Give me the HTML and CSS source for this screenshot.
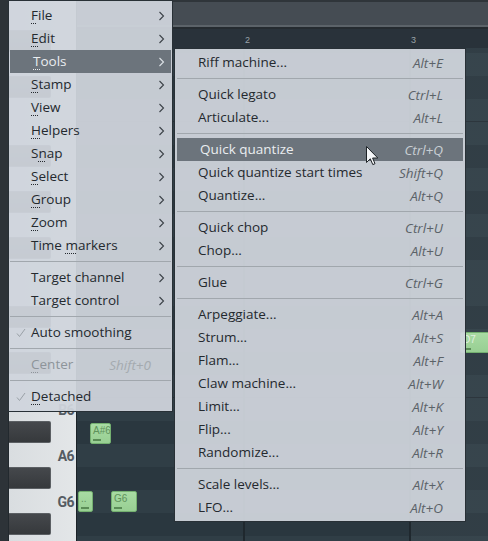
FILE: index.html
```html
<!DOCTYPE html>
<html>
<head>
<meta charset="utf-8">
<link rel="stylesheet" href="styles.css">
</head>
<body>
<div class="app">
  <div class="keys">
    <div class="k w"></div>
    <div class="k w"></div>
    <div class="k b"><span class="bk"></span></div>
    <div class="k w"></div>
    <div class="k b"><span class="bk"></span></div>
    <div class="k w"></div>
    <div class="k w"></div>
    <div class="k b"><span class="bk"></span></div>
    <div class="k w"></div>
    <div class="k b"><span class="bk"></span></div>
    <div class="k w"></div>
    <div class="k b"><span class="bk"></span></div>
    <div class="k w"></div>
    <div class="k w"></div>
    <div class="k b"><span class="bk"></span></div>
    <div class="k w"></div>
    <div class="k b"><span class="bk"></span></div>
    <div class="k w"></div>
    <div class="k w"><span class="kl">B6</span></div>
    <div class="k b"><span class="bk"></span></div>
    <div class="k w"><span class="kl">A6</span></div>
    <div class="k b"><span class="bk"></span></div>
    <div class="k w"><span class="kl">G6</span></div>
    <div class="k b"><span class="bk"></span></div>
    <div class="k w"></div>
  </div>
  <div class="main">
    <div class="toolbar"></div>
    <div class="ruler">
      <span class="bar-num b2">2</span>
      <span class="bar-num b3">3</span>
    </div>
    <div class="grid">
      <div class="note" style="left:13px;top:375px;width:21px;"><span class="nt">A#6</span></div>
      <div class="note" style="left:1px;top:443px;width:15px;"><span class="nt">..</span></div>
      <div class="note" style="left:34px;top:443px;width:26px;"><span class="nt">G6</span></div>
      <div class="note light" style="left:383px;top:284px;width:60px;"><span class="nt">D7</span></div>
    </div>
  </div>
</div>

<div class="menu main-menu">
  <div class="item"><span class="chk"></span><span class="lbl"><span class="mn">F</span>ile</span><span class="key"></span><span class="arr"><svg width="7" height="10" viewBox="0 0 7 10"><path d="M1.5 1l4 4-4 4" fill="none" stroke="currentColor" stroke-width="1.1"/></svg></span></div>
  <div class="item"><span class="chk"></span><span class="lbl"><span class="mn">E</span>dit</span><span class="key"></span><span class="arr"><svg width="7" height="10" viewBox="0 0 7 10"><path d="M1.5 1l4 4-4 4" fill="none" stroke="currentColor" stroke-width="1.1"/></svg></span></div>
  <div class="item active"><span class="chk"></span><span class="lbl"><span class="mn">T</span>ools</span><span class="key"></span><span class="arr"><svg width="7" height="10" viewBox="0 0 7 10"><path d="M1.5 1l4 4-4 4" fill="none" stroke="currentColor" stroke-width="1.1"/></svg></span></div>
  <div class="item"><span class="chk"></span><span class="lbl"><span class="mn">S</span>tamp</span><span class="key"></span><span class="arr"><svg width="7" height="10" viewBox="0 0 7 10"><path d="M1.5 1l4 4-4 4" fill="none" stroke="currentColor" stroke-width="1.1"/></svg></span></div>
  <div class="item"><span class="chk"></span><span class="lbl"><span class="mn">V</span>iew</span><span class="key"></span><span class="arr"><svg width="7" height="10" viewBox="0 0 7 10"><path d="M1.5 1l4 4-4 4" fill="none" stroke="currentColor" stroke-width="1.1"/></svg></span></div>
  <div class="item"><span class="chk"></span><span class="lbl"><span class="mn">H</span>elpers</span><span class="key"></span><span class="arr"><svg width="7" height="10" viewBox="0 0 7 10"><path d="M1.5 1l4 4-4 4" fill="none" stroke="currentColor" stroke-width="1.1"/></svg></span></div>
  <div class="item"><span class="chk"></span><span class="lbl">S<span class="mn">n</span>ap</span><span class="key"></span><span class="arr"><svg width="7" height="10" viewBox="0 0 7 10"><path d="M1.5 1l4 4-4 4" fill="none" stroke="currentColor" stroke-width="1.1"/></svg></span></div>
  <div class="item"><span class="chk"></span><span class="lbl"><span class="mn">S</span>elect</span><span class="key"></span><span class="arr"><svg width="7" height="10" viewBox="0 0 7 10"><path d="M1.5 1l4 4-4 4" fill="none" stroke="currentColor" stroke-width="1.1"/></svg></span></div>
  <div class="item"><span class="chk"></span><span class="lbl"><span class="mn">G</span>roup</span><span class="key"></span><span class="arr"><svg width="7" height="10" viewBox="0 0 7 10"><path d="M1.5 1l4 4-4 4" fill="none" stroke="currentColor" stroke-width="1.1"/></svg></span></div>
  <div class="item"><span class="chk"></span><span class="lbl"><span class="mn">Z</span>oom</span><span class="key"></span><span class="arr"><svg width="7" height="10" viewBox="0 0 7 10"><path d="M1.5 1l4 4-4 4" fill="none" stroke="currentColor" stroke-width="1.1"/></svg></span></div>
  <div class="item"><span class="chk"></span><span class="lbl">Time <span class="mn">m</span>arkers</span><span class="key"></span><span class="arr"><svg width="7" height="10" viewBox="0 0 7 10"><path d="M1.5 1l4 4-4 4" fill="none" stroke="currentColor" stroke-width="1.1"/></svg></span></div>
  <div class="sep"></div>
  <div class="item"><span class="chk"></span><span class="lbl">Target channel</span><span class="key"></span><span class="arr"><svg width="7" height="10" viewBox="0 0 7 10"><path d="M1.5 1l4 4-4 4" fill="none" stroke="currentColor" stroke-width="1.1"/></svg></span></div>
  <div class="item"><span class="chk"></span><span class="lbl">Target control</span><span class="key"></span><span class="arr"><svg width="7" height="10" viewBox="0 0 7 10"><path d="M1.5 1l4 4-4 4" fill="none" stroke="currentColor" stroke-width="1.1"/></svg></span></div>
  <div class="sep"></div>
  <div class="item"><span class="chk"><svg width="10" height="10" viewBox="0 0 10 10"><path d="M1 5.5l2.5 3L9 1" fill="none" stroke="currentColor" stroke-width="1"/></svg></span><span class="lbl">Auto smoothing</span><span class="key"></span><span class="arr"></span></div>
  <div class="sep"></div>
  <div class="item disabled"><span class="chk"></span><span class="lbl"><span class="mn">C</span>enter</span><span class="key">Shift+0</span><span class="arr"></span></div>
  <div class="sep"></div>
  <div class="item"><span class="chk"><svg width="10" height="10" viewBox="0 0 10 10"><path d="M1 5.5l2.5 3L9 1" fill="none" stroke="currentColor" stroke-width="1"/></svg></span><span class="lbl"><span class="mn">D</span>etached</span><span class="key"></span><span class="arr"></span></div>
</div>

<div class="menu sub-menu">
  <div class="item"><span class="chk"></span><span class="lbl">Riff machine...</span><span class="key">Alt+E</span><span class="arr"></span></div>
  <div class="sep"></div>
  <div class="item"><span class="chk"></span><span class="lbl">Quick legato</span><span class="key">Ctrl+L</span><span class="arr"></span></div>
  <div class="item"><span class="chk"></span><span class="lbl">Articulate...</span><span class="key">Alt+L</span><span class="arr"></span></div>
  <div class="sep"></div>
  <div class="item active"><span class="chk"></span><span class="lbl">Quick quantize</span><span class="key">Ctrl+Q</span><span class="arr"></span></div>
  <div class="item"><span class="chk"></span><span class="lbl">Quick quantize start times</span><span class="key">Shift+Q</span><span class="arr"></span></div>
  <div class="item"><span class="chk"></span><span class="lbl">Quantize...</span><span class="key">Alt+Q</span><span class="arr"></span></div>
  <div class="sep"></div>
  <div class="item"><span class="chk"></span><span class="lbl">Quick chop</span><span class="key">Ctrl+U</span><span class="arr"></span></div>
  <div class="item"><span class="chk"></span><span class="lbl">Chop...</span><span class="key">Alt+U</span><span class="arr"></span></div>
  <div class="sep"></div>
  <div class="item"><span class="chk"></span><span class="lbl">Glue</span><span class="key">Ctrl+G</span><span class="arr"></span></div>
  <div class="sep"></div>
  <div class="item"><span class="chk"></span><span class="lbl">Arpeggiate...</span><span class="key">Alt+A</span><span class="arr"></span></div>
  <div class="item"><span class="chk"></span><span class="lbl">Strum...</span><span class="key">Alt+S</span><span class="arr"></span></div>
  <div class="item"><span class="chk"></span><span class="lbl">Flam...</span><span class="key">Alt+F</span><span class="arr"></span></div>
  <div class="item"><span class="chk"></span><span class="lbl">Claw machine...</span><span class="key">Alt+W</span><span class="arr"></span></div>
  <div class="item"><span class="chk"></span><span class="lbl">Limit...</span><span class="key">Alt+K</span><span class="arr"></span></div>
  <div class="item"><span class="chk"></span><span class="lbl">Flip...</span><span class="key">Alt+Y</span><span class="arr"></span></div>
  <div class="item"><span class="chk"></span><span class="lbl">Randomize...</span><span class="key">Alt+R</span><span class="arr"></span></div>
  <div class="sep"></div>
  <div class="item"><span class="chk"></span><span class="lbl">Scale levels...</span><span class="key">Alt+X</span><span class="arr"></span></div>
  <div class="item"><span class="chk"></span><span class="lbl">LFO...</span><span class="key">Alt+O</span><span class="arr"></span></div>
</div>

<svg class="cursor" width="13" height="20" viewBox="0 0 13 20"><path d="M0.5 0.5V16.5L4.3 12.8L6.8 18.6L9 17.7L6.6 12H11.8Z" fill="#f4f6f8" stroke="#1d2226" stroke-width="1" stroke-linejoin="round"/></svg>
</body>
</html>
```

FILE: styles.css
```css
* { box-sizing: border-box; }
html, body { margin: 0; padding: 0; }
body {
  width: 488px;
  height: 541px;
  overflow: hidden;
  position: relative;
  background: #2d3338;
  font-family: "Open Sans", "Noto Sans", sans-serif;
}

.app {
  display: flex;
  height: 541px;
  padding-left: 8px;
}

/* piano keys */
.keys {
  width: 69px;
  flex: none;
  display: flex;
  flex-direction: column;
  margin-top: -16px;
  background: linear-gradient(to right, #d9dde0, #e3e6e8);
  border-right: 1px solid #1b2227;
  border-left: 1px solid #22292e;
}
.k {
  height: 23px;
  flex: none;
  display: flex;
  align-items: center;
  justify-content: flex-end;
  padding-right: 2px;
}
.k.b { justify-content: flex-start; padding: 0; align-items: flex-start; }
.bk {
  width: 42px;
  height: 22px;
  background: linear-gradient(to bottom, #45484c, #36393c);
  border: 1px solid #5b5f63;
  border-left: none;
  border-radius: 0 2px 2px 0;
}
.kl {
  font-family: Roboto, "Liberation Sans", sans-serif;
  font-weight: 700;
  font-size: 14px;
  letter-spacing: -0.6px;
  color: #555c63;
}

.main {
  flex: 1;
  display: flex;
  flex-direction: column;
}
.toolbar {
  height: 29px;
  flex: none;
  background: linear-gradient(to bottom, #2f353a 0 2px, #454c53 2px 25px, #5c6369 25px 27px, #252b30 27px);
}
.ruler {
  height: 19px;
  flex: none;
  position: relative;
  background: #29323a;
  font-family: "Liberation Sans", sans-serif;
  font-size: 9px;
  color: #9aa2a9;
}
.bar-num { position: absolute; top: 6px; }
.bar-num.b2 { left: 168px; }
.bar-num.b3 { left: 334px; }

.grid {
  flex: 1;
  position: relative;
  background:
    linear-gradient(to right, transparent 0 166px, #1f282e 166px 168px, transparent 168px 332px, #1f282e 332px 334px, rgba(255,255,255,0.035) 334px),
    linear-gradient(to bottom,
      #303e46 0 23px, #2a373f 23px 46px, #303e46 46px 69px, #2a373f 69px 92px,
      #303e46 92px 115px, #2a373f 115px 138px, #303e46 138px 184px,
      #2a373f 184px 207px, #303e46 207px 230px, #2a373f 230px 253px, #303e46 253px 275px, #252f36 275px 276px);
  background-size: 100% 100%, 100% 276px;
  background-position: 0 0, 0 74px;
  background-repeat: no-repeat, repeat-y;
}

.note {
  position: absolute;
  height: 21px;
  background: linear-gradient(to bottom, #a8dba3, #98cf93);
  border: 1px solid #74b070;
  border-radius: 2px;
  overflow: hidden;
}
.note::after {
  content: "";
  position: absolute;
  left: 2px;
  bottom: 2px;
  width: 8px;
  height: 2px;
  background: #5a8c56;
}
.nt {
  display: block;
  padding: 2px 0 0 2px;
  font-family: "Liberation Sans", sans-serif;
  font-size: 10px;
  line-height: 10px;
  color: #5f925b;
}
.note.light .nt { color: #e2f0e0; }

/* menus */
.menu {
  position: absolute;
  background: rgba(207, 213, 220, 0.94);
  border: 1px solid #283036;
  color: #24292e;
  font-size: 13.5px;
}
.main-menu {
  left: 8px;
  top: 0;
  width: 165px;
  padding: 3px 1px;
}
.sub-menu {
  left: 174px;
  top: 48px;
  width: 292px;
  padding: 2px;
}
.item {
  display: grid;
  grid-template-columns: 21px 1fr auto 20px;
  align-items: center;
  height: 23px;
  white-space: nowrap;
}
.lbl { line-height: 23px; }
.key {
  font-style: italic;
  color: #5b6268;
  text-align: right;
}
.chk, .arr {
  display: flex;
  align-items: center;
  justify-content: center;
}
.chk { color: #9aa1a7; padding-left: 1px; }
.arr { color: #3b4147; }
.mn {
  text-decoration: underline dotted;
  text-underline-offset: 3px;
  text-decoration-thickness: 1px;
}
.item.active {
  background: #6c747c;
  color: #eaedf0;
}
.item.active .lbl { padding-left: 2px; }
.item.active .key { color: #c9cfd4; }
.item.active .arr { color: #dde2e6; }
.item.disabled { color: #8d949a; }
.item.disabled .key { color: #a4aaaf; }

.sep {
  height: 9px;
  display: flex;
  align-items: center;
}
.sep::after {
  content: "";
  flex: 1;
  height: 1px;
  background: #a1a7ad;
}

.cursor {
  position: absolute;
  left: 366px;
  top: 146px;
}
```
